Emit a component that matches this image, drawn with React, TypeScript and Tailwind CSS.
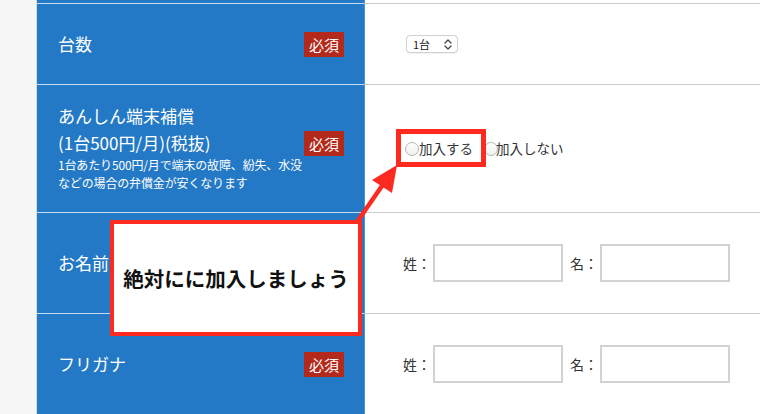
import React from "react";

const FONT = { fontFamily: '"Noto Sans CJK JP", "Noto Sans", sans-serif' };

function Badge({ className = "" }: { className?: string }) {
  return (
    <div
      className={`shrink-0 bg-[#b3291c] text-white text-[15px] leading-[25px] h-[25px] px-[5px] ${className}`}
    >
      必須
    </div>
  );
}

function Radio() {
  return (
    <span className="inline-block w-[14px] h-[14px] rounded-full border border-[#b5b5b5] bg-gradient-to-b from-white to-[#f0f0f0] shrink-0" />
  );
}

function NameInputs() {
  return (
    <div className="flex items-center text-[14px] text-[#333]">
      <span className="w-[28px]">姓：</span>
      <div className="ml-[2px] w-[130px] h-[38px] border-2 border-[#d2d2d2] bg-white" />
      <span className="ml-[7px] w-[28px]">名：</span>
      <div className="ml-[2px] w-[130px] h-[38px] border-2 border-[#d2d2d2] bg-white" />
    </div>
  );
}

export default function App() {
  return (
    <div
      className="relative w-[760px] h-[414px] overflow-hidden bg-[#f6f6f6] flex"
      style={FONT}
    >
      <div className="w-[36px] shrink-0" />
      <div className="flex-1 flex flex-col border-l border-[#d3dbe4] bg-white">
        {/* cut-off previous row */}
        <div className="flex h-[3px] shrink-0">
          <div className="w-[328px] bg-[#2379c5] border-r border-[#4b95d6]" />
          <div className="flex-1 bg-white" />
        </div>

        {/* 台数 */}
        <div className="flex h-[81px] shrink-0">
          <div className="w-[328px] bg-[#2379c5] border-r border-[#4b95d6] border-t border-t-[#c6dbef] flex items-center justify-between pl-[21px] pr-[20px]">
            <span className="text-white text-[17px]">台数</span>
            <Badge />
          </div>
          <div className="flex-1 border-t border-[#cbcbcb] flex items-center pl-[41px]">
            <div className="w-[52px] h-[18px] rounded-[4px] border border-[#d0d0d0] shadow-[0_1px_1px_rgba(0,0,0,0.06)] bg-white flex items-center justify-between pl-[6px] pr-[5px]">
              <span className="text-[11px] text-[#222] leading-none">1台</span>
              <svg width="8" height="11" viewBox="0 0 8 11" fill="none" stroke="#444" strokeWidth="1.3" strokeLinecap="round" strokeLinejoin="round">
                <path d="M1 4 L4 1 L7 4" />
                <path d="M1 7 L4 10 L7 7" />
              </svg>
            </div>
          </div>
        </div>

        {/* あんしん端末補償 */}
        <div className="flex h-[128px] shrink-0">
          <div className="relative w-[328px] bg-[#2379c5] border-r border-[#4b95d6] border-t border-t-[#c6dbef] flex items-center justify-between pl-[21px] pr-[20px]">
            <div className="text-white whitespace-nowrap -mt-[3px]">
              <div className="text-[17px] leading-[27px]">あんしん端末補償</div>
              <div className="text-[17px] leading-[27px]">(1台500円/月)(税抜)</div>
              <div className="text-[12px] leading-[18px] tracking-[-0.15px]">
                1台あたり500円/月で端末の故障、紛失、水没
                <br />
                などの場合の弁償金が安くなります
              </div>
            </div>
            <Badge className="absolute right-[20px] top-[46px]" />
          </div>
          <div className="flex-1 border-t border-[#cbcbcb] flex items-center pl-[40px] text-[13.5px] text-[#333]">
            <Radio />
            <span>加入する</span>
            <span className="ml-[11px]" />
            <Radio />
            <span className="-ml-[2px]">加入しない</span>
          </div>
        </div>

        {/* お名前 */}
        <div className="flex h-[101px] shrink-0">
          <div className="w-[328px] bg-[#2379c5] border-r border-[#4b95d6] border-t border-t-[#c6dbef] flex items-center justify-between pl-[21px] pr-[20px]">
            <span className="text-white text-[17px]">お名前</span>
            <Badge />
          </div>
          <div className="flex-1 border-t border-[#cbcbcb] flex items-center pl-[38px]">
            <NameInputs />
          </div>
        </div>

        {/* フリガナ */}
        <div className="flex flex-1">
          <div className="w-[328px] bg-[#2379c5] border-r border-[#4b95d6] border-t border-t-[#c6dbef] flex items-center justify-between pl-[21px] pr-[20px]">
            <span className="text-white text-[17px]">フリガナ</span>
            <Badge />
          </div>
          <div className="flex-1 border-t border-[#cbcbcb] flex items-center pl-[38px]">
            <NameInputs />
          </div>
        </div>
      </div>

      {/* highlight box around radio */}
      <div className="absolute left-[396px] top-[129px] w-[90px] h-[38px] border-[5px] border-[#ff2a1f]" />

      {/* arrow */}
      <svg className="absolute left-0 top-0" width="760" height="414" viewBox="0 0 760 414">
        <line x1="357" y1="222" x2="384" y2="183" stroke="#ff2a1f" strokeWidth="4.5" />
        <polygon points="397,165 372,180 392,193" fill="#ff2a1f" />
      </svg>

      {/* callout */}
      <div className="absolute left-[110px] top-[220px] w-[252px] h-[116px] border-[4px] border-[#ff2a1f] bg-white flex items-center justify-center">
        <span className="text-[20.5px] font-bold text-[#111]">絶対にに加入しましょう</span>
      </div>
    </div>
  );
}
